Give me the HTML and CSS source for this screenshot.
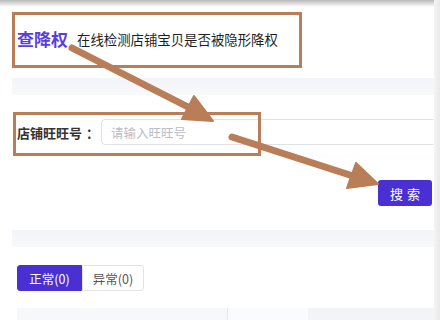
FILE: index.html
```html
<!DOCTYPE html>
<html lang="zh">
<head>
<meta charset="utf-8">
<link rel="stylesheet" href="styles.css">
</head>
<body>
<div class="screen">
  <div class="main">
    <div class="header">
      <span class="title">查降权</span>
      <span class="subtitle">在线检测店铺宝贝是否被隐形降权</span>
    </div>
    <div class="band"></div>
    <div class="form">
      <div class="field">
        <label class="label">店铺旺旺号<span class="colon">：</span></label>
        <div class="input"><span class="placeholder">请输入旺旺号</span></div>
      </div>
      <div class="actions">
        <button class="btn">搜索</button>
      </div>
    </div>
    <div class="band"></div>
    <div class="tabs">
      <span class="tab active">正常(0)</span>
      <span class="tab">异常(0)</span>
    </div>
    <div class="table-head">
      <div class="cell first"></div>
      <div class="cell second"></div>
    </div>
  </div>

  <div class="shade-top"></div>
  <div class="shade-right"></div>
  <div class="mark mark-title"></div>
  <div class="mark mark-field"></div>
  <svg class="arrows" width="440" height="320" viewBox="0 0 440 320">
    <g fill="#b97d57" stroke="#b97d57" stroke-linecap="round" stroke-linejoin="round">
      <line x1="72" y1="48" x2="192" y2="109" stroke-width="7"/>
      <polygon points="213,121 194,96 182,119" stroke-width="2"/>
      <line x1="232" y1="137" x2="356" y2="177" stroke-width="7"/>
      <polygon points="378,184 356,163 347,188" stroke-width="2"/>
    </g>
  </svg>
</div>
</body>
</html>
```

FILE: styles.css
```css
html, body {
  margin: 0;
  padding: 0;
  background: #ffffff;
}

.screen {
  position: relative;
  width: 440px;
  height: 320px;
  overflow: hidden;
  font-family: "Noto Sans CJK SC", "Noto Sans", sans-serif;
  background: #ffffff;
}

.main {
  margin-left: 12px;
  width: 428px;
}

.header {
  height: 78px;
  display: flex;
  align-items: center;
  padding-left: 5px;
  box-sizing: border-box;
}

.title {
  font-size: 17px;
  font-weight: 700;
  color: #5a3ed9;
  line-height: 20px;
}

.subtitle {
  margin-left: 9px;
  font-size: 13.4px;
  color: #1f1f1f;
  line-height: 16px;
}

.band {
  height: 17px;
  background: linear-gradient(#f3f4f7, #f8f9fb);
  margin-right: 6px;
}

.form {
  padding: 24px 0 24px 5px;
}

.field {
  display: flex;
  align-items: center;
}

.label {
  font-size: 13px;
  font-weight: 700;
  color: #333333;
  width: 84px;
  flex: none;
  white-space: nowrap;
}

.colon {
  padding-left: 4px;
}

.input {
  flex: 1;
  height: 26px;
  border: 1px solid #dfe2e8;
  border-radius: 4px;
  box-sizing: border-box;
  display: flex;
  align-items: center;
  padding-left: 9px;
}

.placeholder {
  font-size: 12.5px;
  color: #b9bdc5;
}

.actions {
  display: flex;
  justify-content: flex-end;
  margin-top: 35px;
  padding-right: 8px;
}

.btn {
  width: 54px;
  height: 26px;
  border: none;
  border-radius: 3px;
  background: #4a30d2;
  color: #ffffff;
  font-family: inherit;
  font-size: 13px;
  letter-spacing: 4px;
  padding: 0 0 0 4px;
}

.tabs {
  display: flex;
  margin: 18px 0 0 5px;
}

.tab {
  height: 26px;
  box-sizing: border-box;
  display: flex;
  align-items: center;
  justify-content: center;
  font-size: 12.5px;
  color: #555555;
  border: 1px solid #e1e3e8;
  width: 62px;
  border-radius: 0 3px 3px 0;
}

.tab.active {
  width: 65px;
  background: #4a30d2;
  border-color: #4a30d2;
  color: #ffffff;
  border-radius: 3px 0 0 3px;
}

.table-head {
  display: flex;
  margin: 17px 6px 0 5px;
  height: 14px;
}

.cell {
  background: #f7f8fa;
}

.cell.first {
  width: 210px;
  border-right: 1px solid #e6e8eb;
}

.cell.second {
  flex: 1;
  background: linear-gradient(90deg, #fafbfc 0, #fafbfc 80px, #f3f4f6 80px);
}

.shade-top {
  position: absolute;
  left: 0;
  top: 0;
  width: 440px;
  height: 7px;
  background: linear-gradient(#b9b9b9, rgba(255,255,255,0));
}

.shade-right {
  position: absolute;
  right: 0;
  top: 0;
  width: 6px;
  height: 320px;
  background: linear-gradient(90deg, #f4f4f4, #e9e9e9);
}

.mark {
  position: absolute;
  border: 3px solid #b97d57;
  box-sizing: border-box;
}

.mark-title {
  left: 12px;
  top: 12px;
  width: 290px;
  height: 56px;
}

.mark-field {
  left: 13px;
  top: 112px;
  width: 248px;
  height: 44px;
}

.arrows {
  position: absolute;
  left: 0;
  top: 0;
}
```
